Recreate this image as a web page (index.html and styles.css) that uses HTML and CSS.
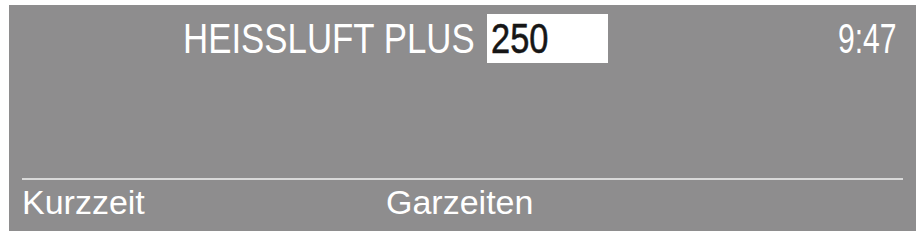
FILE: index.html
```html
<!DOCTYPE html>
<html lang="de">
<head>
<meta charset="utf-8">
<title>Heissluft Plus</title>
<link rel="stylesheet" href="styles.css">
</head>
<body>
<div class="screen">
  <div class="top">
    <div class="title"><span class="squeeze title-text">HEISSLUFT PLUS</span></div>
    <div class="value-box"><span class="squeeze value-text">250</span></div>
    <div class="clock"><span class="squeeze clock-text">9:47</span></div>
  </div>
  <div class="spacer"></div>
  <div class="rule"></div>
  <div class="softkeys">
    <div class="key key-left">Kurzzeit</div>
    <div class="key key-mid">Garzeiten</div>
  </div>
</div>
</body>
</html>
```
FILE: styles.css
```css
html, body {
  margin: 0;
  padding: 0;
  background: #ffffff;
}
body {
  width: 918px;
  height: 231px;
  overflow: hidden;
  font-family: "Liberation Sans", Arial, sans-serif;
}
.screen {
  margin: 5px 2px 0 9px;
  height: 226px;
  background: #8e8d8e;
  display: flex;
  flex-direction: column;
  color: #ffffff;
}
.top {
  display: flex;
  align-items: center;
  padding: 9px 19px 0 174px;
  height: 49px;
}
.squeeze {
  display: inline-block;
  transform-origin: left center;
  white-space: nowrap;
}
.title {
  width: 292px;
  font-size: 43px;
  line-height: 49px;
  height: 49px;
}
.title-text {
  transform: scaleX(0.81);
}
.value-box {
  width: 121px;
  height: 49px;
  margin-left: 12px;
  background: #ffffff;
  color: #161616;
  font-size: 43px;
  line-height: 49px;
  box-sizing: border-box;
  padding-left: 4px;
}
.value-text {
  transform: scaleX(0.8);
  -webkit-text-stroke: 0.6px #161616;
}
.clock {
  margin-left: auto;
  width: 59px;
  font-size: 43px;
  line-height: 49px;
  height: 49px;
}
.clock-text {
  transform: scaleX(0.7);
}
.spacer {
  flex: 1;
}
.rule {
  height: 2px;
  background: #d9d9d9;
  margin: 0 13px;
}
.softkeys {
  display: flex;
  height: 51px;
  font-size: 34px;
  line-height: 44px;
}
.key-left {
  margin-left: 13px;
  width: 364px;
}
```
